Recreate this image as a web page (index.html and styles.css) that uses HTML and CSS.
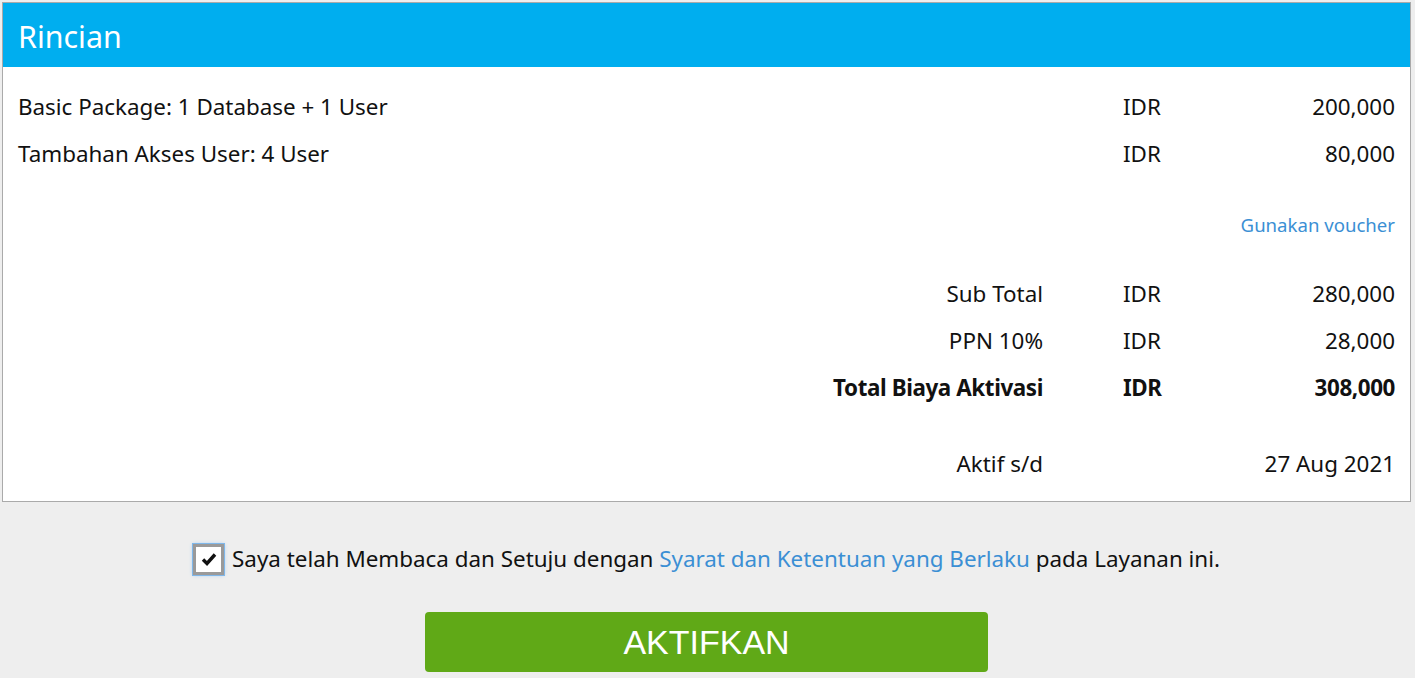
FILE: index.html
```html
<!DOCTYPE html>
<html lang="id">

<head>
    <meta charset="UTF-8">
    <meta name="viewport" content="width=device-width, initial-scale=1.0">
    <title>Rincian</title>
    <link rel="stylesheet" href="styles.css">
</head>

<body>
    <div class="panel">
        <div class="panel-head">Rincian</div>
        <div class="panel-body">
            <div class="row">
                <span class="item">Basic Package: 1 Database + 1 User</span>
                <span class="cur">IDR</span>
                <span class="amt">200,000</span>
            </div>
            <div class="row">
                <span class="item">Tambahan Akses User: 4 User</span>
                <span class="cur">IDR</span>
                <span class="amt">80,000</span>
            </div>
            <div class="voucher"><a href="#">Gunakan voucher</a></div>

            <div class="row sub">
                <span class="label">Sub Total</span>
                <span class="cur">IDR</span>
                <span class="amt">280,000</span>
            </div>
            <div class="row">
                <span class="label">PPN 10%</span>
                <span class="cur">IDR</span>
                <span class="amt">28,000</span>
            </div>
            <div class="row total">
                <span class="label">Total Biaya Aktivasi</span>
                <span class="cur">IDR</span>
                <span class="amt">308,000</span>
            </div>
            <div class="row until">
                <span class="label">Aktif s/d</span>
                <span class="date">27 Aug 2021</span>
            </div>
        </div>
    </div>

    <div class="agree">
        <span class="check">
            <svg width="16" height="14" viewBox="0 0 16 14">
                <path d="M2 7.5 L6 11.5 L14 2.5" fill="none" stroke="#111" stroke-width="3.4" />
            </svg>
        </span>
        <span>Saya telah Membaca dan Setuju dengan <a href="#">Syarat dan Ketentuan yang Berlaku</a> pada Layanan ini.</span>
    </div>

    <div class="actions">
        <button class="btn-activate">AKTIFKAN</button>
    </div>
</body>

</html>
```

FILE: styles.css
```css
body {
    font-family: 'Noto Sans', 'Open Sans', sans-serif;
    background: #eeeeee;
    margin: 0;
    padding: 2px 4px 0 2px;
    color: #111;
}

a {
    color: #3b8fd4;
    text-decoration: none;
}

.panel {
    border: 1px solid #aaa;
    background: #fff;
}

.panel-head {
    background: #00aeef;
    color: #fff;
    height: 64px;
    box-sizing: border-box;
    padding: 3px 15px 0 15px;
    line-height: 61px;
    font-size: 30.4px;
}

.panel-body {
    padding: 16px 15px 14px 15px;
    font-size: 22.4px;
}

.row {
    display: grid;
    grid-template-columns: 1fr 80px 72px 200px;
    line-height: 47px;
}

.row .item {
    grid-column: 1 / 3;
}

.row .label {
    grid-column: 1;
    text-align: right;
}

.row .cur {
    grid-column: 3;
}

.row .amt {
    grid-column: 4;
    text-align: right;
}

.row .date {
    grid-column: 3 / 5;
    text-align: right;
}

.voucher {
    margin-top: 24px;
    line-height: 47px;
    text-align: right;
    font-size: 18.6px;
}

.row.sub {
    margin-top: 22px;
}

.row.total {
    font-weight: bold;
    letter-spacing: -0.4px;
}

.row.until {
    margin-top: 29px;
}

.agree {
    display: flex;
    justify-content: center;
    align-items: center;
    gap: 8px;
    margin-top: 41px;
    font-size: 22.4px;
    line-height: 32px;
}

.check {
    box-sizing: border-box;
    width: 31px;
    height: 31px;
    border: 3px solid #9a9a9a;
    outline: 1px solid #7fb7ea;
    box-shadow: 0 0 4px #9cc8f0;
    background: #fff;
    display: flex;
    align-items: center;
    justify-content: center;
}

.actions {
    display: flex;
    justify-content: center;
    margin-top: 37px;
}

.btn-activate {
    width: 563px;
    height: 60px;
    border: none;
    border-radius: 4px;
    background: #60a917;
    color: #fff;
    font-family: 'Liberation Sans', Arial, sans-serif;
    font-size: 34px;
    cursor: pointer;
}
```
